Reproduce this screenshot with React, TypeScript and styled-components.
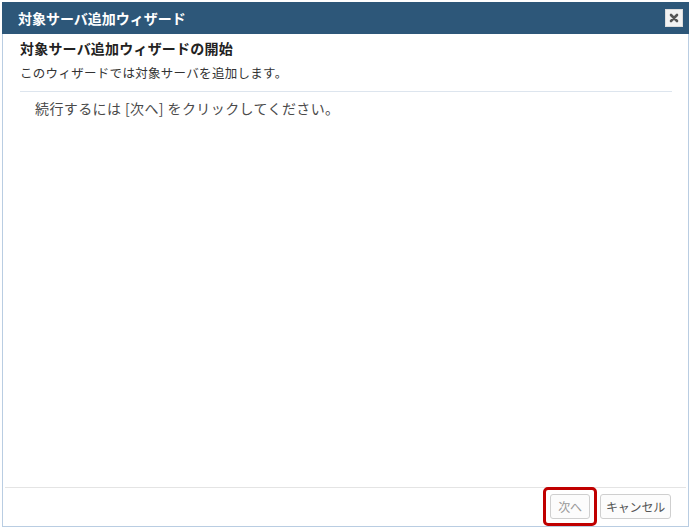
import React from "react";
import styled, { createGlobalStyle } from "styled-components";

const Global = createGlobalStyle`
  html, body { margin: 0; padding: 0; background: #ffffff; }
  body { font-family: "Noto Sans CJK JP", "Noto Sans", "Liberation Sans", sans-serif; }
`;

const Page = styled.div`
  padding: 2px 3px 0 2px;
`;

const Window = styled.div`
  width: 687px;
  height: 525px;
  box-sizing: border-box;
  border: 1px solid #b9cde2;
  border-top: none;
  display: flex;
  flex-direction: column;
  background: #fff;
`;

const TitleBar = styled.div`
  height: 32px;
  margin: 0 -1px;
  background: #2d5779;
  display: flex;
  align-items: center;
  justify-content: space-between;
  padding: 0 6px 0 16px;
`;

const Title = styled.span`
  color: #fff;
  font-weight: bold;
  font-size: 14px;
  letter-spacing: 0px;
`;

const CloseButton = styled.div`
  width: 18px;
  height: 18px;
  box-sizing: border-box;
  background: #f2f2f2;
  border: 1px solid #dcdcdc;
  display: flex;
  align-items: center;
  justify-content: center;
`;

const Content = styled.div`
  flex: 1;
  padding: 4px 16px 0 17px;
  display: flex;
  flex-direction: column;
`;

const Heading = styled.div`
  font-size: 14px;
  font-weight: bold;
  line-height: 20px;
  color: #222;
  letter-spacing: 0.2px;
`;

const Subtitle = styled.div`
  margin-top: 6px;
  font-size: 12.5px;
  line-height: 18px;
  color: #333;
  letter-spacing: 0.3px;
`;

const Divider = styled.div`
  margin-top: 9px;
  height: 1px;
  background: #dde5ee;
`;

const BodyText = styled.div`
  margin-top: 6px;
  padding-left: 15px;
  font-size: 14px;
  line-height: 20px;
  color: #4a4a4a;
  letter-spacing: 0.4px;
  white-space: pre;
`;

const Footer = styled.div`
  margin: 0 2px;
  height: 39px;
  box-sizing: border-box;
  border-top: 1px solid #e4e4e4;
  display: flex;
  justify-content: flex-end;
  align-items: flex-start;
  gap: 10px;
  padding: 6px 15px 0 0;
`;

const Highlight = styled.span`
  position: relative;
  display: inline-flex;
  &::after {
    content: "";
    position: absolute;
    inset: -7px;
    border: 3px solid #c00000;
    border-radius: 5px;
    pointer-events: none;
  }
`;

const Button = styled.button<{ $muted?: boolean; $width: number }>`
  width: ${(p) => p.$width}px;
  height: 25px;
  box-sizing: border-box;
  padding: 0;
  background: #fcfcfc;
  border: 1px solid #cfcfcf;
  border-radius: 3px;
  font-family: inherit;
  font-size: 12px;
  color: ${(p) => (p.$muted ? "#9a9a9a" : "#555")};
  text-align: center;
  letter-spacing: -0.2px;
`;

export default function App() {
  return (
    <Page>
      <Global />
      <Window>
        <TitleBar>
          <Title>対象サーバ追加ウィザード</Title>
          <CloseButton>
            <svg width="10" height="10" viewBox="0 0 10 10">
              <path d="M2 2 L8 8 M8 2 L2 8" stroke="#555" strokeWidth="2.6" strokeLinecap="round" />
            </svg>
          </CloseButton>
        </TitleBar>
        <Content>
          <Heading>対象サーバ追加ウィザードの開始</Heading>
          <Subtitle>このウィザードでは対象サーバを追加します。</Subtitle>
          <Divider />
          <BodyText>続行するには [次へ] をクリックしてください。</BodyText>
        </Content>
        <Footer>
          <Highlight>
            <Button $muted $width={40}>次へ</Button>
          </Highlight>
          <Button $width={71}>キャンセル</Button>
        </Footer>
      </Window>
    </Page>
  );
}
